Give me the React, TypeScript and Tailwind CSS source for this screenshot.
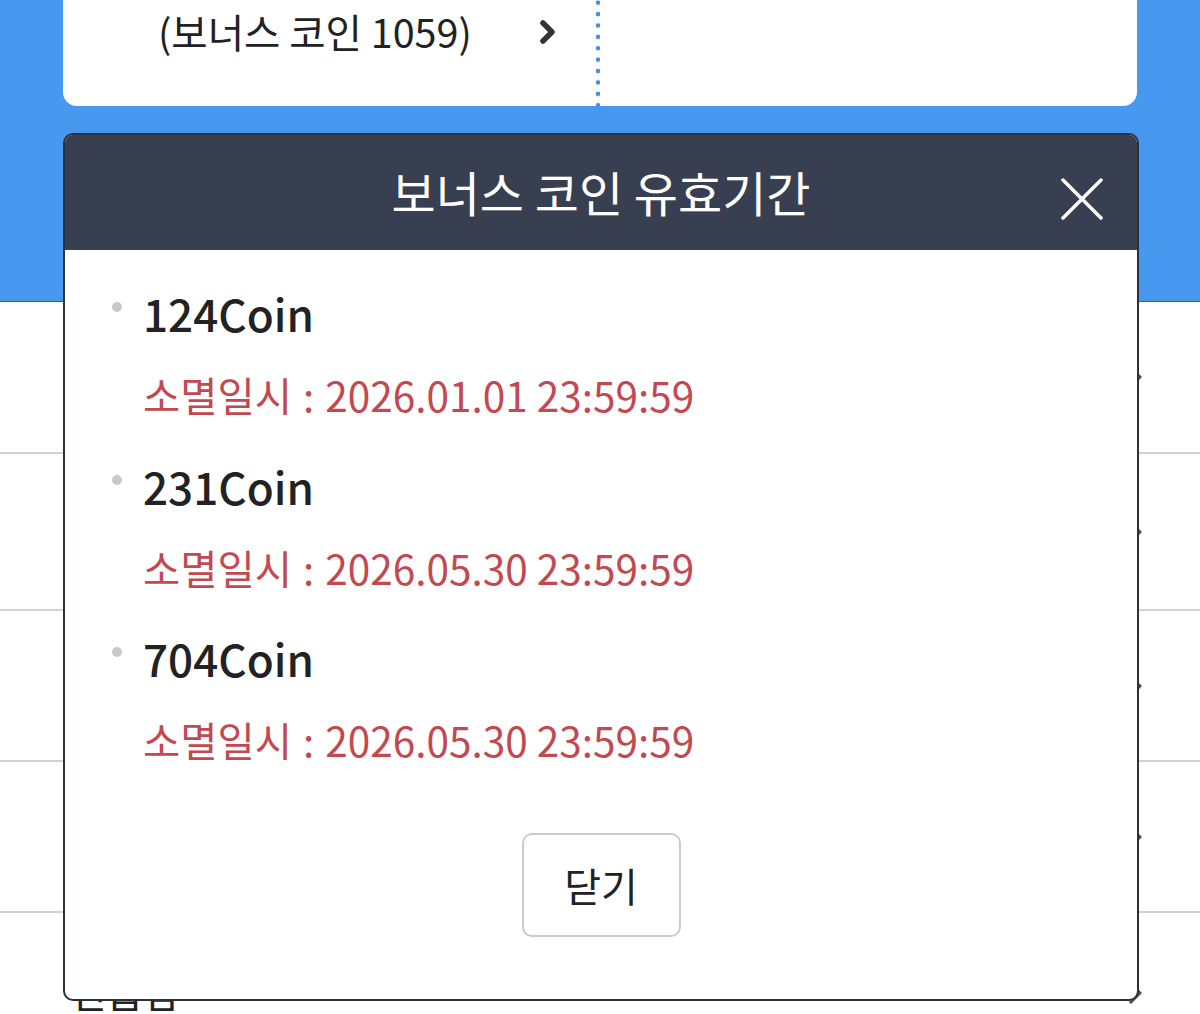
import React from "react";

const coins = [
  { amount: "124Coin", expire: "2026.01.01 23:59:59" },
  { amount: "231Coin", expire: "2026.05.30 23:59:59" },
  { amount: "704Coin", expire: "2026.05.30 23:59:59" },
];

const rows = ["h-[152px]", "h-[157px]", "h-[151px]", "h-[151px]", "h-[160px]"];

const RowChevron = () => (
  <svg width="14" height="24" viewBox="0 0 14 24" fill="none">
    <path d="M3 3l9 9-9 9" stroke="#4a4d55" strokeWidth="3" strokeLinecap="square" />
  </svg>
);

export default function App() {
  return (
    <div className="relative w-[1200px] h-[1014px] overflow-hidden bg-white font-['Noto_Sans_CJK_KR','Noto_Sans',sans-serif]">
      {/* top summary area */}
      <div className="h-[302px] bg-[#4699ee] border-b border-[#2d5f9e] px-[63px]">
        <div className="flex h-[106px] rounded-b-[14px] bg-white">
          <div className="flex w-[532px] items-start pt-[11px]">
            <span className="ml-[95px] text-[39.5px] leading-none text-[#222]">(보너스 코인 1059)</span>
            <svg className="ml-[66px] mt-[8px]" width="20" height="26" viewBox="0 0 20 26" fill="none">
              <path d="M5 4l9 9-9 9" stroke="#333" strokeWidth="5.5" strokeLinecap="round" strokeLinejoin="round" />
            </svg>
          </div>
          <div className="w-[6px] h-full bg-[radial-gradient(circle,#4a8fd8_2px,transparent_2.6px)] bg-[length:6px_11.4px] bg-[position:0_-3px]" />
        </div>
      </div>

      {/* list behind the dialog */}
      <div className="flex flex-col">
        {rows.map((h, i) => (
          <div
            key={i}
            className={`${h} flex items-center justify-between pl-[70px] pr-[58px] ${i < rows.length - 1 ? "border-b-2 border-[#d2d2d2]" : ""}`}
          >
            <span className={`text-[40px] leading-none text-[#222] ${i === rows.length - 1 ? "self-start mt-[58px]" : ""}`}>
              {i === rows.length - 1 ? "연습함" : "코인 내역"}
            </span>
            <RowChevron />
          </div>
        ))}
      </div>

      {/* dialog */}
      <div className="absolute left-[63px] top-[133px] w-[1076px] h-[868px] flex flex-col rounded-[10px] border-2 border-[#2c303b] bg-white overflow-hidden">
        <div className="relative flex h-[115px] shrink-0 items-center justify-center bg-[#383f51]">
          <span className="text-[48px] leading-none text-white -mt-[4px]">보너스 코인 유효기간</span>
          <svg className="absolute right-[34px] top-[43px]" width="42" height="42" viewBox="0 0 42 42" fill="none">
            <path d="M2 2l38 38M40 2L2 40" stroke="#fff" strokeWidth="3.5" strokeLinecap="round" />
          </svg>
        </div>

        <div className="flex flex-1 flex-col pl-[47px] pt-[41px]">
          {coins.map((c, i) => (
            <div key={i} className={`flex ${i > 0 ? "mt-[48px]" : ""}`}>
              <span className="mt-[11px] h-[10px] w-[10px] shrink-0 rounded-full bg-[#c9c9c9]" />
              <div className="ml-[21px] flex flex-col">
                <span className="text-[44px] font-medium leading-none text-[#222]">{c.amount}</span>
                <span className="mt-[40px] text-[40.5px] leading-none text-[#c34951]">
                  소멸일시<span className="ml-[11px] mr-[11px]">:</span>
                  {c.expire}
                </span>
              </div>
            </div>
          ))}

          <div className="mt-[72px] flex justify-center pr-[47px]">
            <button className="h-[104px] w-[159px] rounded-[10px] border-2 border-[#cbcbcb] bg-white text-[40px] leading-none text-[#222]">
              닫기
            </button>
          </div>
        </div>
      </div>
    </div>
  );
}
